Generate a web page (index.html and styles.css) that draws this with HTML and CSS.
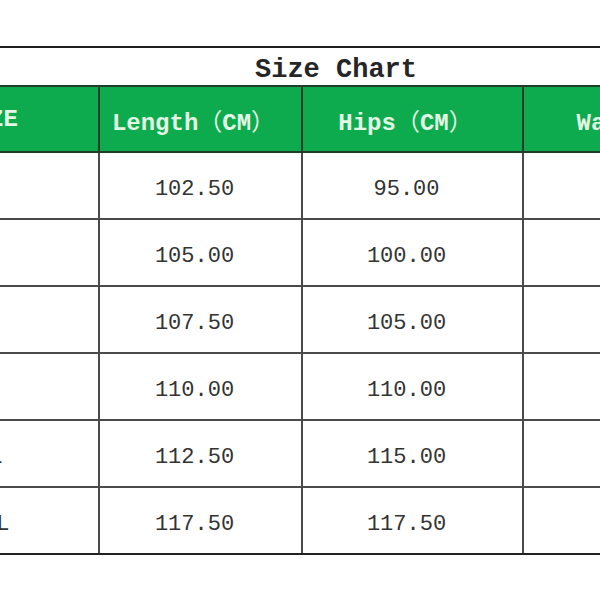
FILE: index.html
```html
<!DOCTYPE html>
<html>
<head>
<meta charset="utf-8">
<link rel="stylesheet" href="styles.css">
</head>
<body>
<div class="frame">
  <table class="chart">
    <colgroup>
      <col class="c-size">
      <col class="c-len">
      <col class="c-hips">
      <col class="c-waist">
    </colgroup>
    <tr class="title-row"><td colspan="4" class="title">Size Chart</td></tr>
    <tr class="head-row">
      <th class="size-head">SIZE</th>
      <th>Length<span class="fw">（</span>CM<span class="fw">）</span></th>
      <th>Hips<span class="fw">（</span>CM<span class="fw">）</span></th>
      <th>Waist<span class="fw">（</span>CM<span class="fw">）</span></th>
    </tr>
    <tr class="data-row"><td>S</td><td>102.50</td><td>95.00</td><td>64.00</td></tr>
    <tr class="data-row"><td>M</td><td>105.00</td><td>100.00</td><td>69.00</td></tr>
    <tr class="data-row"><td>L</td><td>107.50</td><td>105.00</td><td>74.00</td></tr>
    <tr class="data-row"><td>XL</td><td>110.00</td><td>110.00</td><td>79.00</td></tr>
    <tr class="data-row"><td>XXL</td><td>112.50</td><td>115.00</td><td>84.00</td></tr>
    <tr class="data-row"><td>XXXL</td><td>117.50</td><td>117.50</td><td>89.00</td></tr>
  </table>
</div>
</body>
</html>
```
FILE: styles.css
```css
html, body {
  margin: 0;
  padding: 0;
  background: #ffffff;
  width: 600px;
  height: 600px;
  overflow: hidden;
}

.frame {
  width: 600px;
  overflow: hidden;
  padding-top: 46px;
}

.chart {
  margin-left: -122px;
  border-collapse: collapse;
  table-layout: fixed;
  width: 914px;
  font-family: "Liberation Mono", "Noto Sans CJK SC", monospace;
}

.c-size { width: 220px; }
.c-len { width: 203px; }
.c-hips { width: 221px; }
.c-waist { width: 270px; }

.title-row td {
  border-top: 2px solid #1e1e1e;
  height: 29px;
  padding: 7px 0 0 0;
}

.title {
  text-align: center;
  font-weight: bold;
  font-size: 27px;
  color: #262626;
  vertical-align: middle;
}

.head-row th {
  background: #0eaa4e;
  color: #e2f7e4;
  font-weight: bold;
  font-size: 24px;
  height: 64px;
  padding: 0 14px 0 0;
  border: 2px solid #1f3d27;
  text-align: center;
  vertical-align: middle;
  white-space: nowrap;
}

.head-row th.size-head {
  padding: 0;
}

.fw {
  display: inline-block;
  width: 24px;
  font-family: "Noto Sans CJK SC", sans-serif;
  font-weight: normal;
  text-spacing-trim: space-all;
}

.head-row th .fw:nth-of-type(1) {
  text-align: right;
}

.head-row th .fw:nth-of-type(2) {
  text-align: center;
}

.data-row td {
  height: 57px;
  padding: 8px 12px 0 0;
  border: 2px solid #4a4a4a;
  font-size: 22px;
  color: #333333;
  text-align: center;
  vertical-align: middle;
}

.data-row:last-child td {
  border-bottom-color: #222222;
}
```
